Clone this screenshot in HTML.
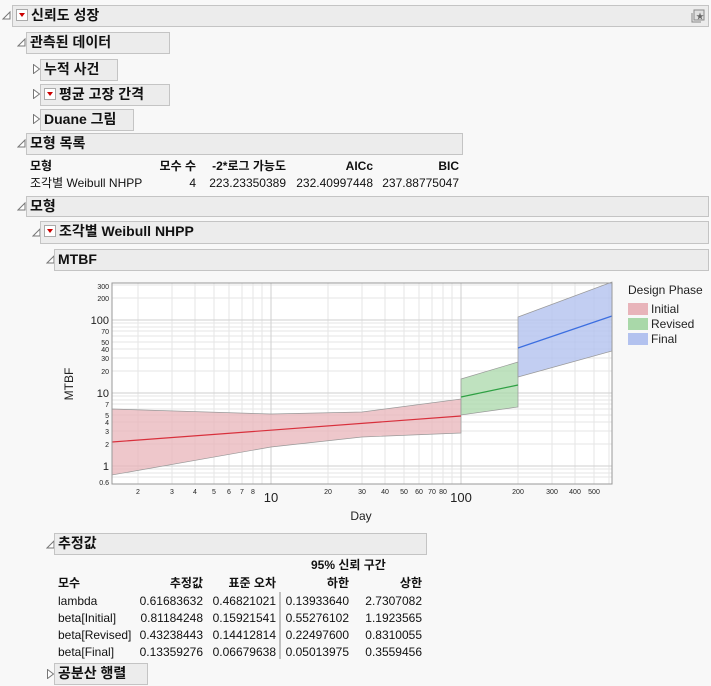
<!DOCTYPE html><html><head><meta charset="utf-8"><style>
body{margin:0;width:711px;height:686px;background:#f8f8f8;font-family:"Liberation Sans","Noto Sans CJK KR",sans-serif;color:#111;position:relative;overflow:hidden}
.b{position:absolute;background:#ececec;border:1px solid #c4c4c4;box-sizing:border-box;font-weight:bold;font-size:14px;line-height:19px;padding-left:3px;white-space:nowrap}
.t{position:absolute;width:9px;height:10px}
.rb{display:inline-block;width:12px;height:12px;border:1px solid #aaa;background:#fff;box-sizing:border-box;vertical-align:-1px;margin-right:3px;position:relative}
.rb:after{content:"";position:absolute;left:2px;top:3px;border-left:3px solid transparent;border-right:3px solid transparent;border-top:4px solid #c00}
.x{position:absolute;font-size:12px;white-space:nowrap;line-height:14px}
.r{text-align:right}
</style></head><body>
<svg class="t" style="left:2px;top:10px"><path d="M1 9H8V2Z" fill="#fff" stroke="#777"/></svg>
<div class="b" style="left:12px;top:5px;width:697px;height:22px"><span class="rb"></span>신뢰도 성장
<svg style="position:absolute;right:3px;top:3px" width="14" height="14"><rect x="3" y="1" width="10" height="10" fill="#e0e0e0" stroke="#888"/><path d="M1 4V13H10" fill="none" stroke="#888"/><text x="5" y="10" font-size="8" fill="#666">★</text></svg></div>
<svg class="t" style="left:17px;top:37px"><path d="M1 9H8V2Z" fill="#fff" stroke="#777"/></svg>
<div class="b" style="left:26px;top:32px;width:144px;height:22px">관측된 데이터</div>
<svg class="t" style="left:32px;top:64px"><path d="M1.5 0.5L7.5 5L1.5 9.5Z" fill="#fff" stroke="#777"/></svg>
<div class="b" style="left:40px;top:59px;width:78px;height:22px">누적 사건</div>
<svg class="t" style="left:32px;top:89px"><path d="M1.5 0.5L7.5 5L1.5 9.5Z" fill="#fff" stroke="#777"/></svg>
<div class="b" style="left:40px;top:84px;width:130px;height:22px"><span class="rb"></span>평균 고장 간격</div>
<svg class="t" style="left:32px;top:114px"><path d="M1.5 0.5L7.5 5L1.5 9.5Z" fill="#fff" stroke="#777"/></svg>
<div class="b" style="left:40px;top:109px;width:94px;height:22px">Duane 그림</div>
<svg class="t" style="left:17px;top:138px"><path d="M1 9H8V2Z" fill="#fff" stroke="#777"/></svg>
<div class="b" style="left:26px;top:133px;width:437px;height:22px">모형 목록</div>
<div class="x" style="left:30px;top:159px;font-weight:bold">모형</div>
<div class="x r" style="left:140px;top:159px;width:56px;font-weight:bold">모수 수</div>
<div class="x r" style="left:190px;top:159px;width:96px;font-weight:bold">-2*로그 가능도</div>
<div class="x r" style="left:300px;top:159px;width:73px;font-weight:bold">AICc</div>
<div class="x r" style="left:380px;top:159px;width:79px;font-weight:bold">BIC</div>
<div class="x" style="left:30px;top:176px">조각별 Weibull NHPP</div>
<div class="x r" style="left:140px;top:176px;width:56px">4</div>
<div class="x r" style="left:190px;top:176px;width:96px">223.23350389</div>
<div class="x r" style="left:290px;top:176px;width:83px">232.40997448</div>
<div class="x r" style="left:370px;top:176px;width:89px">237.88775047</div>
<svg class="t" style="left:17px;top:201px"><path d="M1 9H8V2Z" fill="#fff" stroke="#777"/></svg>
<div class="b" style="left:26px;top:196px;width:683px;height:21px">모형</div>
<svg class="t" style="left:32px;top:227px"><path d="M1 9H8V2Z" fill="#fff" stroke="#777"/></svg>
<div class="b" style="left:40px;top:221px;width:669px;height:23px"><span class="rb"></span>조각별 Weibull NHPP</div>
<svg class="t" style="left:46px;top:254px"><path d="M1 9H8V2Z" fill="#fff" stroke="#777"/></svg>
<div class="b" style="left:54px;top:249px;width:655px;height:22px">MTBF</div>
<svg style="position:absolute;left:0;top:0" width="711" height="686" font-family="Liberation Sans,sans-serif">
<rect x="112" y="283" width="500" height="201" fill="#fff"/>
<g stroke="#e6e6e6" stroke-width="1">
<path d="M138 283V484M172 283V484M195 283V484M214 283V484M229 283V484M242 283V484M253 283V484M262 283V484M328 283V484M362 283V484M385 283V484M404 283V484M419 283V484M432 283V484M443 283V484M452 283V484M518 283V484M552 283V484M575 283V484M594 283V484M609 283V484"/>
<path d="M112 477H612M112 473H612M112 469H612M112 444H612M112 431H612M112 422H612M112 415H612M112 409H612M112 404H612M112 400H612M112 396H612M112 371H612M112 358H612M112 349H612M112 342H612M112 336H612M112 331H612M112 327H612M112 323H612M112 298H612M112 285H612"/>
</g>
<g stroke="#cfcfcf"><path d="M271 283V484M461 283V484M112 466H612M112 393H612M112 320H612"/></g>
<path d="M112 409 L271 414 L362 412 L461 399 L461 433 L362 437 L271 447 L112 475Z" fill="#e8b4ba" fill-opacity=".75" stroke="#999" stroke-width=".7"/>
<path d="M461 379 L518 362 L518 407 L461 415Z" fill="#a9d8a9" fill-opacity=".75" stroke="#999" stroke-width=".7"/>
<path d="M518 317 L612 282 L612 351 L518 377Z" fill="#b3c2ef" fill-opacity=".8" stroke="#999" stroke-width=".7"/>
<path d="M112 442 L461 416" stroke="#d8303c" stroke-width="1.2"/>
<path d="M461 397 L518 385" stroke="#2ea043" stroke-width="1.2"/>
<path d="M518 348 L612 316" stroke="#3b6ee0" stroke-width="1.2"/>
<rect x="112" y="283" width="500" height="201" fill="none" stroke="#999"/>
<g font-size="7" fill="#222" text-anchor="end">
<text x="109" y="289">300</text><text x="109" y="301">200</text><text x="109" y="334">70</text><text x="109" y="345">50</text><text x="109" y="352">40</text><text x="109" y="361">30</text><text x="109" y="374">20</text><text x="109" y="407">7</text><text x="109" y="418">5</text><text x="109" y="425">4</text><text x="109" y="434">3</text><text x="109" y="447">2</text><text x="109" y="485">0.6</text></g>
<g font-size="11" fill="#222" text-anchor="end"><text x="109" y="324">100</text><text x="109" y="397">10</text><text x="109" y="470">1</text></g>
<g font-size="7" fill="#222" text-anchor="middle">
<text x="138" y="494">2</text><text x="172" y="494">3</text><text x="195" y="494">4</text><text x="214" y="494">5</text><text x="229" y="494">6</text><text x="242" y="494">7</text><text x="253" y="494">8</text><text x="328" y="494">20</text><text x="362" y="494">30</text><text x="385" y="494">40</text><text x="404" y="494">50</text><text x="419" y="494">60</text><text x="432" y="494">70</text><text x="443" y="494">80</text><text x="518" y="494">200</text><text x="552" y="494">300</text><text x="575" y="494">400</text><text x="594" y="494">500</text></g>
<g font-size="13" fill="#222" text-anchor="middle"><text x="271" y="502">10</text><text x="461" y="502">100</text></g>
<text x="361" y="520" font-size="12" text-anchor="middle" fill="#222">Day</text>
<text transform="translate(73,384) rotate(-90)" font-size="12" text-anchor="middle" fill="#222">MTBF</text>
<text x="628" y="294" font-size="12" fill="#222">Design Phase</text>
<rect x="628" y="303" width="20" height="12" fill="#e8b4ba"/><text x="651" y="313" font-size="12" fill="#222">Initial</text>
<rect x="628" y="318" width="20" height="12" fill="#a9d8a9"/><text x="651" y="328" font-size="12" fill="#222">Revised</text>
<rect x="628" y="333" width="20" height="12" fill="#b3c2ef"/><text x="651" y="343" font-size="12" fill="#222">Final</text>
<path d="M280 592V659" stroke="#888"/>
</svg>
<svg class="t" style="left:46px;top:539px"><path d="M1 9H8V2Z" fill="#fff" stroke="#777"/></svg>
<div class="b" style="left:54px;top:533px;width:373px;height:22px">추정값</div>
<div class="x" style="left:311px;top:558px;font-weight:bold">95% 신뢰 구간</div>
<div class="x" style="left:58px;top:576px;font-weight:bold">모수</div>
<div class="x r" style="left:140px;top:576px;width:63px;font-weight:bold">추정값</div>
<div class="x r" style="left:210px;top:576px;width:66px;font-weight:bold">표준 오차</div>
<div class="x r" style="left:290px;top:576px;width:59px;font-weight:bold">하한</div>
<div class="x r" style="left:360px;top:576px;width:62px;font-weight:bold">상한</div>
<div class="x" style="left:58px;top:593px;line-height:17px">lambda<br>beta[Initial]<br>beta[Revised]<br>beta[Final]</div>
<div class="x r" style="left:130px;top:593px;width:73px;line-height:17px">0.61683632<br>0.81184248<br>0.43238443<br>0.13359276</div>
<div class="x r" style="left:203px;top:593px;width:73px;line-height:17px">0.46821021<br>0.15921541<br>0.14412814<br>0.06679638</div>
<div class="x r" style="left:276px;top:593px;width:73px;line-height:17px">0.13933640<br>0.55276102<br>0.22497600<br>0.05013975</div>
<div class="x r" style="left:349px;top:593px;width:73px;line-height:17px">2.7307082<br>1.1923565<br>0.8310055<br>0.3559456</div>
<svg class="t" style="left:46px;top:669px"><path d="M1.5 0.5L7.5 5L1.5 9.5Z" fill="#fff" stroke="#777"/></svg>
<div class="b" style="left:54px;top:663px;width:94px;height:22px">공분산 행렬</div>
</body></html>
